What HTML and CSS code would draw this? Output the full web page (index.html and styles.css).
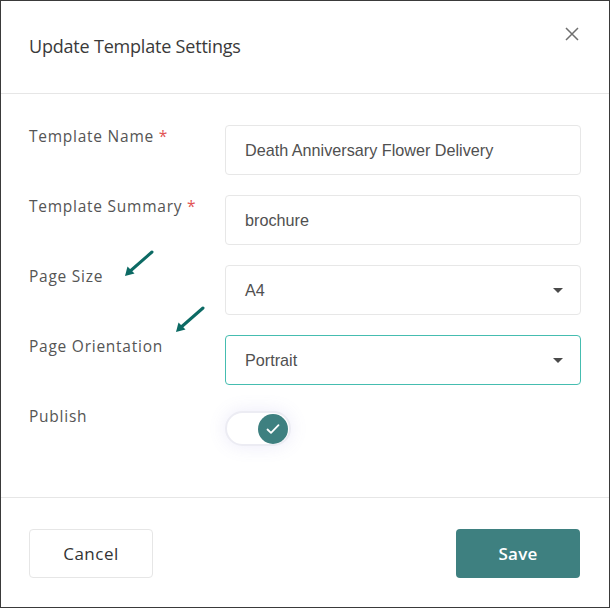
FILE: index.html
```html
<!DOCTYPE html>
<html>
<head>
<meta charset="utf-8">
<link rel="stylesheet" href="styles.css">
</head>
<body>
<div class="modal">
  <header class="modal-header">
    <h1 class="title">Update Template Settings</h1>
    <button class="close" aria-label="Close">
      <svg width="14" height="14" viewBox="0 0 14 14"><path d="M1 1L13 13M13 1L1 13" stroke="#6f6f6f" stroke-width="1.5" fill="none"/></svg>
    </button>
  </header>
  <main class="modal-body">
    <div class="row">
      <label class="label">Template Name <span class="req">*</span></label>
      <div class="field">Death Anniversary Flower Delivery</div>
    </div>
    <div class="row">
      <label class="label">Template Summary <span class="req">*</span></label>
      <div class="field">brochure</div>
    </div>
    <div class="row">
      <label class="label">Page Size</label>
      <div class="field select">A4<span class="caret"></span></div>
    </div>
    <div class="row">
      <label class="label">Page Orientation</label>
      <div class="field select focused">Portrait<span class="caret"></span></div>
    </div>
    <div class="row">
      <label class="label">Publish</label>
      <div class="toggle">
        <span class="knob">
          <svg width="14" height="12" viewBox="0 0 14 12"><path d="M1.5 6.5L5 9.8L12.5 2.2" stroke="#fff" stroke-width="1.8" fill="none" stroke-linecap="round" stroke-linejoin="round"/></svg>
        </span>
      </div>
    </div>
    <svg class="arrow arrow-1" width="34" height="30" viewBox="0 0 34 30"><path d="M30 2L6 23" stroke="#0c6a64" stroke-width="3" fill="none" stroke-linecap="round"/><path d="M3 26L5.5 16.5L12.5 23.5Z" fill="#0c6a64"/></svg>
    <svg class="arrow arrow-2" width="34" height="30" viewBox="0 0 34 30"><path d="M30 2L6 23" stroke="#0c6a64" stroke-width="3" fill="none" stroke-linecap="round"/><path d="M3 26L5.5 16.5L12.5 23.5Z" fill="#0c6a64"/></svg>
  </main>
  <footer class="modal-footer">
    <button class="btn btn-cancel">Cancel</button>
    <button class="btn btn-save">Save</button>
  </footer>
</div>
</body>
</html>
```
FILE: styles.css
```css
* { box-sizing: border-box; }
html, body { margin: 0; padding: 0; background: #fff; }
body { font-family: "Open Sans", "Noto Sans", sans-serif; }
.modal {
  width: 610px;
  height: 608px;
  border: 1px solid #3a3a3a;
  background: #fff;
  display: flex;
  flex-direction: column;
}
.modal-header {
  height: 93px;
  border-bottom: 1px solid #e6e6e6;
  display: flex;
  justify-content: space-between;
  align-items: flex-start;
  padding: 0 28px 0 28px;
}
.title {
  margin: 32px 0 0 0;
  font-size: 18px;
  font-weight: 400;
  color: #3a3a3a;
  letter-spacing: -0.2px;
  line-height: 26px;
}
.close {
  margin-top: 25px;
  background: none;
  border: 0;
  padding: 0;
  width: 18px;
  height: 16px;
  display: flex;
  align-items: center;
  justify-content: center;
}
.modal-body {
  position: relative;
  padding: 31px 29px 0 28px;
  display: flex;
  flex-direction: column;
  gap: 20px;
  height: 404px;
  border-bottom: 1px solid #e6e6e6;
}
.row {
  display: grid;
  grid-template-columns: 196px 356px;
  align-items: start;
}
.label {
  font-size: 15.5px;
  color: #555;
  padding-top: 1px;
  letter-spacing: 0.75px;
  line-height: 20px;
}
.req { color: #e25454; }
.field {
  height: 50px;
  border: 1px solid #e7e7e7;
  border-radius: 4px;
  padding: 0 19px;
  display: flex;
  align-items: center;
  font-family: "Liberation Sans", Arial, sans-serif;
  font-size: 16.2px;
  color: #505050;
  position: relative;
}
.field.focused { border-color: #45bdb0; }
.caret {
  position: absolute;
  right: 17px;
  top: 22px;
  width: 0;
  height: 0;
  border-left: 5px solid transparent;
  border-right: 5px solid transparent;
  border-top: 5px solid #4a4a4a;
}
.toggle {
  margin-top: 6px;
  width: 66px;
  height: 35px;
  border: 2px solid #ececf3;
  border-radius: 18px;
  background: #fff;
  box-shadow: 0 0 18px rgba(120, 110, 210, 0.14);
  position: relative;
}
.knob {
  position: absolute;
  right: 1px;
  top: 0.5px;
  width: 30px;
  height: 30px;
  border-radius: 50%;
  background: #3e8080;
  display: flex;
  align-items: center;
  justify-content: center;
}
.arrow { position: absolute; }
.arrow-1 { left: 121px; top: 156px; }
.arrow-2 { left: 172px; top: 212px; }
.modal-footer {
  flex: 1;
  display: flex;
  justify-content: space-between;
  padding: 31px 29px 0 28px;
}
.btn {
  width: 124px;
  height: 49px;
  border-radius: 4px;
  font-family: "Open Sans", "Noto Sans", sans-serif;
  font-size: 17px;
  letter-spacing: 0.5px;
}
.btn-cancel {
  background: #fff;
  border: 1px solid #e6e6e6;
  color: #333;
}
.btn-save {
  background: #3e8080;
  border: 0;
  color: #fff;
  font-weight: 600;
  letter-spacing: 0.2px;
}
```
